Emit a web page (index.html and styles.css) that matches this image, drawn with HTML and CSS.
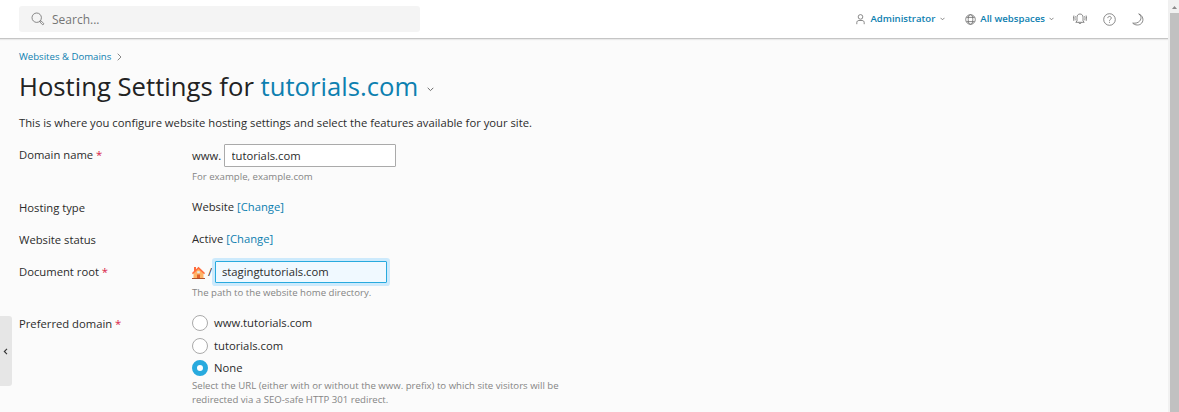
FILE: index.html
```html
<!DOCTYPE html>
<html lang="en">
<head>
<meta charset="utf-8">
<title>Hosting Settings</title>
<link rel="stylesheet" href="styles.css">
</head>
<body>
<div class="window">
  <div class="app">
    <header class="topbar">
      <div class="search">
        <svg class="search-icon" width="14" height="14" viewBox="0 0 14 14"><circle cx="5.7" cy="5.7" r="4.7"/><path d="M9 9.2l.9-.4 2.7 2.5a.9.9 0 0 1-1.3 1.2L8.8 9.9z"/></svg>
        <span>Search...</span>
      </div>
      <nav class="tools">
        <a class="tool user"><svg width="9" height="11" viewBox="0 0 9 11"><circle cx="4.5" cy="2.9" r="2.3"/><path d="M.8 10.2V8.7c0-1.4.8-2.2 2.2-2.2h3c1.4 0 2.2.8 2.2 2.2v1.5"/></svg><span>Administrator</span><svg class="caret" width="5" height="4" viewBox="0 0 5 4"><path d="M.5.8l2 2 2-2"/></svg></a>
        <a class="tool spaces"><svg width="11" height="11" viewBox="0 0 11 11"><circle cx="5.5" cy="5.5" r="4.8"/><ellipse cx="5.5" cy="5.5" rx="2.3" ry="4.8"/><path d="M1.4 3.4h8.2M1.4 7.6h8.2"/></svg><span>All webspaces</span><svg class="caret" width="5" height="4" viewBox="0 0 5 4"><path d="M.5.8l2 2 2-2"/></svg></a>
        <svg class="bell" width="14" height="12" viewBox="0 0 14 12"><path d="M2.8 9.300h8.400L10 7.900V4.200C10 2.300 8.800 1 7 1S4 2.300 4 4.200v3.700zM5.700 9.500c.2 1.500 2.400 1.500 2.600 0M2.400 3.200c-.6 1.300-.6 2.800 0 4M11.600 3.200c.6 1.300.6 2.800 0 4M.9 2.500c-.6 1.600-.6 3.800 0 5.400M13.100 2.500c.6 1.600.6 3.800 0 5.400"/></svg>
        <svg class="help" width="13" height="13" viewBox="0 0 13 13"><circle cx="6.5" cy="6.5" r="5.8"/><path d="M4.8 5.100c0-2.300 3.500-2.200 3.500 0 0 1.300-1.800 1.200-1.800 2.700M6.500 8.800v1"/></svg>
        <svg class="moon" width="12" height="13" viewBox="0 0 12 13"><path d="M6.700.9c4.500 2.300 2.400 10.300-6 9.200 2.300 2.400 6.800 2.700 9 0C12.100 7.300 10.900 2.300 6.700.9z"/></svg>
      </nav>
    </header>
    <main class="page">
      <div class="crumbs"><a>Websites &amp; Domains</a><svg width="5" height="8" viewBox="0 0 5 8"><path d="M.7.7L4 4 .7 7.300"/></svg></div>
      <h1 class="title">Hosting Settings for <a>tutorials.com</a><svg width="7" height="5" viewBox="0 0 7 5"><path d="M.7.8l2.8 2.800L6.300.8"/></svg></h1>
      <p class="intro">This is where you configure website hosting settings and select the features available for your site.</p>
      <form class="form">
        <div class="row row-domain">
          <div class="label">Domain name <b>*</b></div>
          <div class="value">
            <div class="line"><span class="www">www.</span><input class="field" type="text" value="tutorials.com"></div>
            <div class="hint">For example, example.com</div>
          </div>
        </div>
        <div class="row row-type"><div class="label">Hosting type</div><div class="value plain">Website <a>[Change]</a></div></div>
        <div class="row row-status"><div class="label">Website status</div><div class="value plain">Active <a>[Change]</a></div></div>
        <div class="row row-root">
          <div class="label">Document root <b>*</b></div>
          <div class="value">
            <div class="line">
              <svg class="home" width="13" height="13" viewBox="0 0 13 13"><path fill="#ffb366" d="M1.500 7l5-5 5 5v5.200h-10z"/><path fill="#dfeaf0" d="M5.200 5.200h2.600v2H5.200z"/><path fill="#e0602c" d="M5 8.500h3v3.700H5z"/><path fill="#ff6c3c" d="M2 1h2v2.200L6.500.700 13 7l-.8 1.200L6.500 3 .8 8.200 0 7l2-1.900z"/><path fill="#a8441a" d="M0 12h13v.9H0z"/></svg>
              <span class="slash">/</span><input class="field focused" type="text" value="stagingtutorials.com">
            </div>
            <div class="hint">The path to the website home directory.</div>
          </div>
        </div>
        <div class="row row-preferred">
          <div class="label">Preferred domain <b>*</b></div>
          <div class="value">
            <label class="option"><i class="radio"></i>www.tutorials.com</label>
            <label class="option second"><i class="radio"></i>tutorials.com</label>
            <label class="option"><i class="radio checked"></i>None</label>
            <div class="hint wrap">Select the URL (either with or without the www. prefix) to which site visitors will be redirected via a SEO-safe HTTP 301 redirect.</div>
          </div>
        </div>
      </form>
    </main>
    <div class="collapse"><svg width="5" height="7" viewBox="0 0 5 7"><path d="M4 .8L1.300 3.500 4 6.200"/></svg></div>
  </div>
  <div class="scrollbar"><svg width="5" height="3" viewBox="0 0 5 3"><path d="M0 3L2.500 0 5 3z"/></svg><div class="thumb"></div></div>
</div>
</body>
</html>
```
FILE: styles.css
```css
* { box-sizing: border-box; }
body { margin: 0; background: #fbfbfb; color: #2b2b2b; font: 11.25px/16px "Open Sans", sans-serif; overflow: hidden; }
svg { fill: none; stroke: #6c6c6c; stroke-width: .8; flex: none; }
a { color: #0d80b0; }
.window { display: flex; height: 412px; overflow: hidden; }
.app { position: relative; flex: 1; min-width: 0; }
.topbar { height: 39px; display: flex; justify-content: space-between; background: #fff; border-bottom: 1px solid #c5c5c5; box-shadow: 0 1px 1px #e9e9e9; padding: 6px 24px 0 19px; }
.search { width: 401px; height: 26px; border-radius: 3px; background: #f4f4f4; display: flex; align-items: center; padding-left: 12px; gap: 7px; font-size: 12px; color: #757575; }
.search span { padding-top: 1px; }
.tools { display: flex; align-items: center; height: 26px; font-size: 9.6px; font-weight: 600; }
.tool { display: flex; align-items: center; }
.user span { margin: 0 5px; }
.spaces { margin-left: 20px; }
.spaces span { margin: 0 4px; }
.bell { margin-left: 19px; }
.help { margin: 1px 0 0 16px; }
.moon { margin: 0 0 0 16px; }
.page { padding: 10px 19px 0; }
.crumbs { display: flex; align-items: center; gap: 6px; font-size: 9.6px; height: 16px; }
.title { margin: 6px 0 0; font-size: 25.67px; line-height: 32px; font-weight: 400; color: #222; display: flex; align-items: center; white-space: pre; }
.title svg { margin: 5px 0 0 9px; stroke-width: 1; }
.intro { margin: 12px 0 0; }
.form { margin: 13px 0 0; }
.row { display: grid; grid-template-columns: 173px 370px; }
.row-domain { height: 52px; }
.row-type { height: 32px; }
.row-status { height: 32px; }
.row-root { height: 52px; }
.row .label { padding-top: 3px; }
.row-type .label, .row-status .label { padding-top: 4px; }
.row-root .label, .row-preferred .label { padding-top: 4px; }
.label b { color: #d92348; font-weight: 400; }
.plain { padding-top: 3px; }
.line { display: flex; align-items: center; height: 23px; }
.www { width: 32px; }
.field { width: 172px; height: 23px; border: 1px solid #aaa; border-radius: 1px; padding: 0 6.5px; font: inherit; color: #2b2b2b; background: #fff; outline: 0; }
.row-root .line { height: 24px; }
.focused { height: 22px; padding: 0 6px 2px; background: #f0f9ff; border-color: #28aade; box-shadow: 0 0 0 3px #cdeafc; }
.home { stroke: none; margin-top: 1px; }
.slash { width: 10px; padding-left: 3px; }
.hint { font-size: 9.62px; line-height: 14px; color: #858585; margin-top: 3px; }
.row-root .hint { margin-top: 2px; }
.row-preferred .wrap { margin-top: 0; }
.option { display: flex; align-items: center; gap: 6px; height: 22px; }
.second { height: 23px; }
.radio { width: 16px; height: 16px; border: 1px solid #aaa; border-radius: 50%; background: #fff; }
.checked { border: 5px solid #28aade; }
.collapse { position: absolute; left: 0; top: 316px; width: 12px; height: 70px; background: #e6e6e6; border-radius: 0 3px 3px 0; display: flex; align-items: center; padding-left: 3px; }
.collapse svg { stroke: #333; stroke-width: 1.1; }
.scrollbar { width: 11px; background: #f1f1f1; display: flex; flex-direction: column; align-items: flex-end; }
.scrollbar svg { margin: 6px 2px 4px 0; fill: #8a8a8a; stroke: none; }
.thumb { width: 9px; flex: 1; background: #c1c1c1; }
```
